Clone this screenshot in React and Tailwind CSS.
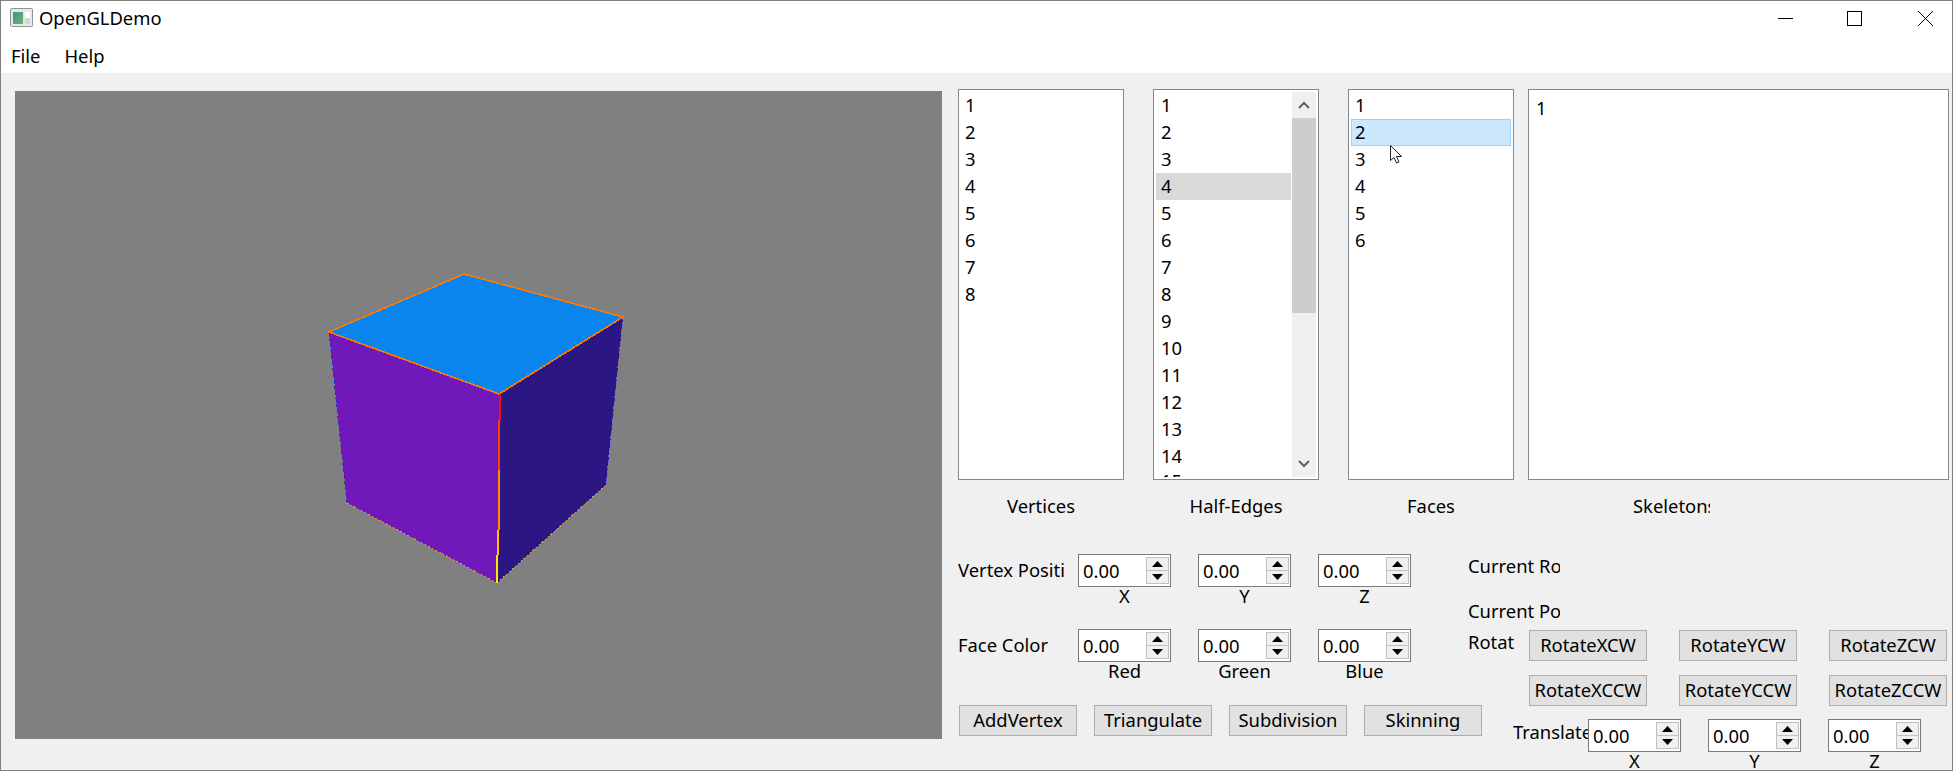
import React from "react";

const fontStack = "font-['Noto_Sans',sans-serif]";

function Spin({ label }) {
  return (
    <div className="flex flex-col w-[93px] shrink-0">
      <div className="h-[33px] border border-[#7a7a7a] bg-white flex items-center justify-between pl-[4px] pr-[1px]">
        <span className="leading-none mt-[1px]">0.00</span>
        <div className="w-[23px] h-[27px] border border-[#c0c0c0] bg-[#f0f0f0] flex flex-col">
          <div className="h-[13px] border-b border-[#c0c0c0] flex items-center justify-center">
            <svg width="11" height="6" viewBox="0 0 11 6"><path d="M5.5 0L11 6H0z" fill="#000" /></svg>
          </div>
          <div className="flex-1 flex items-center justify-center">
            <svg width="11" height="6" viewBox="0 0 11 6"><path d="M0 0H11L5.5 6z" fill="#000" /></svg>
          </div>
        </div>
      </div>
      <div className="h-[18px] leading-[18px] text-center whitespace-nowrap">{label}</div>
    </div>
  );
}

function Btn({ children }) {
  return (
    <div className="w-[118px] h-[31px] shrink-0 bg-[#e1e1e1] border border-[#adadad] flex items-center justify-center whitespace-nowrap leading-none">
      {children}
    </div>
  );
}

function Items({ count, selected }) {
  return Array.from({ length: count }, (_, i) => (
    <div
      key={i}
      className={`h-[27px] pl-[5px] shrink-0 ${i === 14 ? "leading-[22px]" : "leading-[26px]"} ${selected === i ? "bg-[#d9d9d9] mr-[1px]" : ""}`}
    >
      {i + 1}
    </div>
  ));
}

function Cube() {
  return (
    <svg className="block" width="927" height="648" viewBox="15 91 927 648" shapeRendering="crispEdges">
      <polygon points="329,332 499,394 497,583 347,503" fill="#7118ba" />
      <polygon points="499,394 623,317 606,485 497,583" fill="#2b1684" />
      <polygon points="464,274 623,317 499,394 329,332" fill="#0a85ee" />
      <path d="M329 332L347 503" stroke="#1a35c0" strokeWidth="1" strokeDasharray="3 3" />
      <path d="M623 317L606 485" stroke="#6a5ce8" strokeWidth="1" strokeDasharray="3 3" />
      <path d="M347 503L497 583" stroke="#d8963c" strokeWidth="1" strokeDasharray="2 2" />
      <path d="M497 583L606 485" stroke="#d8963c" strokeWidth="1" strokeDasharray="2 2" />
      <path d="M464 274L623 317L499 394L329 332Z" fill="none" stroke="#ff7a00" strokeWidth="1.6" />
      <path d="M499.5 394L499.5 420" stroke="#f01010" strokeWidth="2" />
      <path d="M499 420L499 470" stroke="#ff4000" strokeWidth="2" />
      <path d="M498.5 470L498.5 530" stroke="#ff9000" strokeWidth="2" />
      <path d="M498 530L498 555" stroke="#ffc000" strokeWidth="2" />
      <path d="M497 555L497 583" stroke="#ffe800" strokeWidth="2" />
    </svg>
  );
}

export default function App() {
  return (
    <div className={`w-[1953px] h-[771px] border border-[#808080] bg-[#f0f0f0] flex flex-col overflow-hidden text-[18.4px] text-black ${fontStack}`}>
      <div className="h-[35px] shrink-0 bg-white flex items-center pl-[9px] pr-[19px]">
        <svg width="23" height="20" viewBox="0 0 23 20" className="mt-[-1px]">
          <defs>
            <linearGradient id="ic" x1="0" y1="0" x2="1" y2="1">
              <stop offset="0" stopColor="#3a8fb0" />
              <stop offset="1" stopColor="#6cb85a" />
            </linearGradient>
          </defs>
          <rect x="0.5" y="0.5" width="22" height="18" rx="1" fill="#e8e8e8" stroke="#8e9396" />
          <rect x="3" y="4" width="10" height="12" fill="url(#ic)" />
          <rect x="15" y="4" width="5" height="6" fill="#ffffff" />
          <rect x="15" y="10" width="5" height="6" fill="#cfd8d2" />
        </svg>
        <span className="ml-[6px] mt-[-2px]">OpenGLDemo</span>
        <div className="ml-auto flex items-center">
          <svg width="15" height="15" viewBox="0 0 15 15"><path d="M0 7.5H15" stroke="#000" /></svg>
          <svg width="15" height="15" viewBox="0 0 15 15" className="ml-[54px]"><rect x="0.5" y="0.5" width="14" height="14" fill="none" stroke="#000" /></svg>
          <svg width="15" height="15" viewBox="0 0 15 15" className="ml-[56px]"><path d="M0 0L15 15M15 0L0 15" stroke="#000" /></svg>
        </div>
      </div>
      <div className="h-[37px] shrink-0 bg-white flex items-center pl-[10px] pt-[3px] gap-[24px]">
        <span>File</span>
        <span>Help</span>
      </div>
      <div className="flex-1 min-h-0 flex pl-[14px] overflow-hidden">
        <div className="mt-[18px] w-[927px] h-[648px] bg-[#808080] shrink-0">
          <Cube />
        </div>
        <div className="ml-[16px] pt-[16px] flex flex-col w-[991px]">
          <div className="flex h-[391px] shrink-0">
            <div className="w-[166px] border border-[#828790] bg-white py-[2px] pl-[1px] overflow-hidden">
              <Items count={8} />
            </div>
            <div className="w-[166px] ml-[29px] border border-[#828790] bg-white pl-[2px] pr-[2px] py-[2px] flex overflow-hidden">
              <div className="flex-1 min-w-0 flex flex-col overflow-hidden">
                <Items count={15} selected={3} />
              </div>
              <div className="w-[24px] shrink-0 bg-[#f0f0f0] flex flex-col">
                <div className="h-[26px] flex items-center justify-center">
                  <svg width="12" height="8" viewBox="0 0 12 8"><path d="M1 7L6 2L11 7" fill="none" stroke="#606060" strokeWidth="2" /></svg>
                </div>
                <div className="h-[195px] bg-[#cdcdcd]" />
                <div className="flex-1 flex items-end justify-center pb-[9px]">
                  <svg width="12" height="8" viewBox="0 0 12 8"><path d="M1 1L6 6L11 1" fill="none" stroke="#606060" strokeWidth="2" /></svg>
                </div>
              </div>
            </div>
            <div className="relative w-[166px] ml-[29px] border border-[#828790] bg-white py-[2px] px-[2px]">
              <div className="h-[27px] leading-[26px] pl-[4px]">1</div>
              <div className="h-[27px] leading-[24px] pl-[3px] border border-[#99d1ff] bg-[#cce8ff]">2</div>
              <div className="h-[27px] leading-[26px] pl-[4px]">3</div>
              <div className="h-[27px] leading-[26px] pl-[4px]">4</div>
              <div className="h-[27px] leading-[26px] pl-[4px]">5</div>
              <div className="h-[27px] leading-[26px] pl-[4px]">6</div>
              <svg className="absolute left-[41px] top-[55px]" width="13" height="19" viewBox="0 0 13 19">
                <path d="M0.5 0.5V15.5L4 12.5L6.5 18L9 17L6.5 11.5H11.5Z" fill="#fff" stroke="#222" strokeWidth="1" />
              </svg>
            </div>
            <div className="w-[421px] ml-[14px] border border-[#828790] bg-white pt-[5px] pl-[7px]">
              <div className="h-[27px] leading-[26px]">1</div>
            </div>
          </div>
          <div className="flex mt-[14px] h-[24px] leading-[24px] shrink-0">
            <div className="w-[166px] text-center">Vertices</div>
            <div className="w-[166px] ml-[29px] text-center">Half-Edges</div>
            <div className="w-[166px] ml-[29px] text-center">Faces</div>
            <div className="w-[77px] ml-[119px] overflow-hidden whitespace-nowrap">Skeletons</div>
          </div>
          <div className="flex flex-1 min-h-0">
            <div className="w-[510px] shrink-0 flex flex-col pt-[36px]">
              <div className="flex">
                <div className="w-[106px] h-[33px] leading-[31px] overflow-hidden whitespace-nowrap mr-[14px]">Vertex Position</div>
                <div className="flex gap-[27px]">
                  <Spin label="X" />
                  <Spin label="Y" />
                  <Spin label="Z" />
                </div>
              </div>
              <div className="flex mt-[24px]">
                <div className="w-[106px] h-[33px] leading-[31px] overflow-hidden whitespace-nowrap mr-[14px]">Face Color</div>
                <div className="flex gap-[27px]">
                  <Spin label="Red" />
                  <Spin label="Green" />
                  <Spin label="Blue" />
                </div>
              </div>
              <div className="flex gap-[17px] mt-[25px] ml-[1px]">
                <Btn>AddVertex</Btn>
                <Btn>Triangulate</Btn>
                <Btn>Subdivision</Btn>
                <Btn>Skinning</Btn>
              </div>
            </div>
            <div className="flex-1 min-w-0 flex flex-col pt-[36px]">
              <div className="w-[92px] h-[24px] leading-[24px] overflow-hidden whitespace-nowrap">Current Rotation</div>
              <div className="w-[92px] h-[24px] leading-[24px] overflow-hidden whitespace-nowrap mt-[21px]">Current Position</div>
              <div className="flex mt-[7px]">
                <div className="w-[47px] h-[24px] leading-[24px] overflow-hidden whitespace-nowrap mr-[14px]">Rotation</div>
                <div className="grid grid-cols-[118px_118px_118px] gap-x-[32px] gap-y-[14px]">
                  <Btn>RotateXCW</Btn>
                  <Btn>RotateYCW</Btn>
                  <Btn>RotateZCW</Btn>
                  <Btn>RotateXCCW</Btn>
                  <Btn>RotateYCCW</Btn>
                  <Btn>RotateZCCW</Btn>
                </div>
              </div>
              <div className="flex mt-[13px] ml-[45px]">
                <div className="w-[75px] h-[24px] leading-[24px] mt-[1px] overflow-hidden whitespace-nowrap">Translate</div>
                <div className="flex gap-[27px]">
                  <Spin label="X" />
                  <Spin label="Y" />
                  <Spin label="Z" />
                </div>
              </div>
            </div>
          </div>
        </div>
      </div>
    </div>
  );
}
